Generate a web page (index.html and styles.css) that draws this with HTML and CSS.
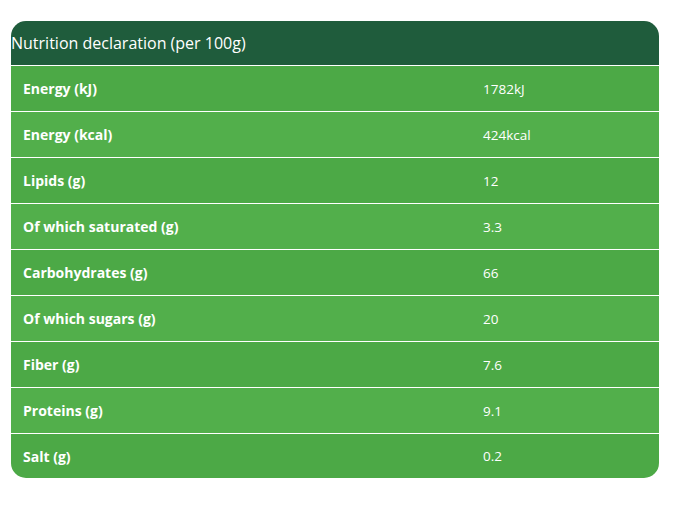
FILE: index.html
```html
<!DOCTYPE html>
<html>
<head>
<meta charset="utf-8">
<link rel="stylesheet" href="styles.css">
</head>
<body>
<div class="table">
  <div class="caption">Nutrition declaration (per 100g)</div>
  <div class="row odd"><div class="label">Energy (kJ)</div><div class="value">1782kJ</div></div>
  <div class="row even"><div class="label">Energy (kcal)</div><div class="value">424kcal</div></div>
  <div class="row odd"><div class="label">Lipids (g)</div><div class="value">12</div></div>
  <div class="row even"><div class="label">Of which saturated (g)</div><div class="value">3.3</div></div>
  <div class="row odd"><div class="label">Carbohydrates (g)</div><div class="value">66</div></div>
  <div class="row even"><div class="label">Of which sugars (g)</div><div class="value">20</div></div>
  <div class="row odd"><div class="label">Fiber (g)</div><div class="value">7.6</div></div>
  <div class="row even"><div class="label">Proteins (g)</div><div class="value">9.1</div></div>
  <div class="row odd last"><div class="label">Salt (g)</div><div class="value">0.2</div></div>
</div>
</body>
</html>
```
FILE: styles.css
```css
html, body {
  margin: 0;
  padding: 0;
  background: #ffffff;
}
body {
  padding: 21px 0 0 11px;
  font-family: "Open Sans", "Noto Sans", sans-serif;
}
.table {
  width: 648px;
  border-radius: 15px;
  overflow: hidden;
  color: #ffffff;
}
.caption {
  background: #1f5c3c;
  height: 44px;
  line-height: 44px;
  font-size: 16px;
  border-bottom: 1px solid #ffffff;
}
.row {
  display: grid;
  grid-template-columns: 460px 1fr;
  height: 45px;
  align-items: center;
  border-bottom: 1px solid #ffffff;
}
.row.last {
  border-bottom: none;
  height: 44px;
}
.odd {
  background: #4ca946;
}
.even {
  background: #52af4b;
}
.label {
  font-weight: 700;
  font-size: 14px;
  padding-left: 12px;
}
.value {
  font-size: 13.5px;
  padding-left: 12px;
}
```
